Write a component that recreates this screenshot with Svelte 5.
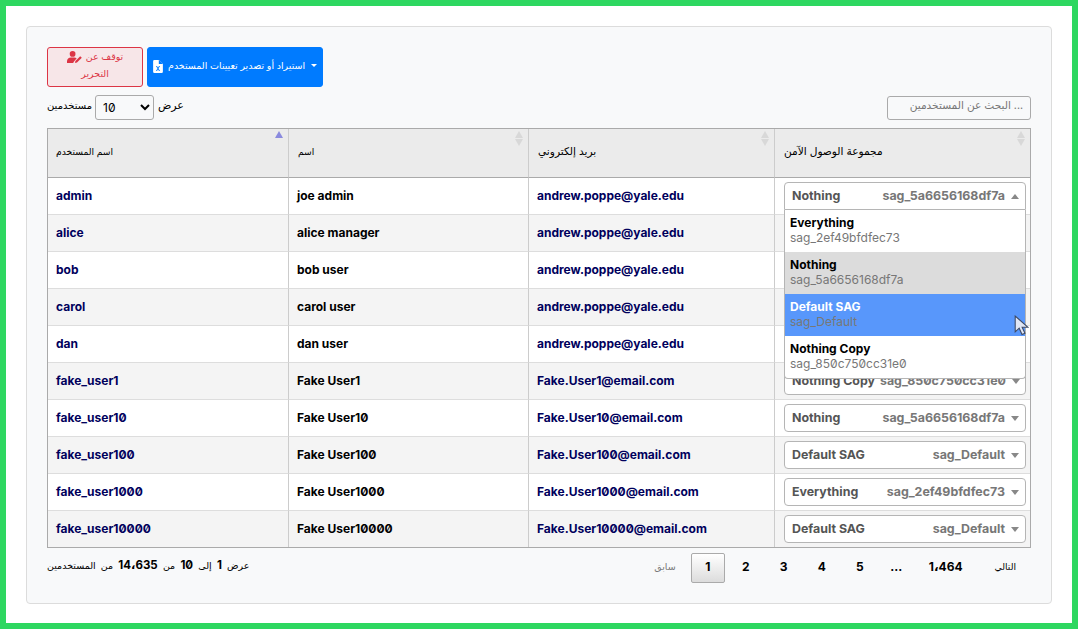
<script>
	const users = [
		{ id: 'admin', name: 'joe admin', email: 'andrew.poppe@yale.edu', sag: 'Nothing', code: 'sag_5a6656168df7a' },
		{ id: 'alice', name: 'alice manager', email: 'andrew.poppe@yale.edu', sag: 'Everything', code: 'sag_2ef49bfdfec73' },
		{ id: 'bob', name: 'bob user', email: 'andrew.poppe@yale.edu', sag: 'Nothing', code: 'sag_5a6656168df7a' },
		{ id: 'carol', name: 'carol user', email: 'andrew.poppe@yale.edu', sag: 'Nothing', code: 'sag_5a6656168df7a' },
		{ id: 'dan', name: 'dan user', email: 'andrew.poppe@yale.edu', sag: 'Nothing', code: 'sag_5a6656168df7a' },
		{ id: 'fake_user1', name: 'Fake User1', email: 'Fake.User1@email.com', sag: 'Nothing Copy', code: 'sag_850c750cc31e0' },
		{ id: 'fake_user10', name: 'Fake User10', email: 'Fake.User10@email.com', sag: 'Nothing', code: 'sag_5a6656168df7a' },
		{ id: 'fake_user100', name: 'Fake User100', email: 'Fake.User100@email.com', sag: 'Default SAG', code: 'sag_Default' },
		{ id: 'fake_user1000', name: 'Fake User1000', email: 'Fake.User1000@email.com', sag: 'Everything', code: 'sag_2ef49bfdfec73' },
		{ id: 'fake_user10000', name: 'Fake User10000', email: 'Fake.User10000@email.com', sag: 'Default SAG', code: 'sag_Default' }
	];
	const options = [
		{ sag: 'Everything', code: 'sag_2ef49bfdfec73', cls: '' },
		{ sag: 'Nothing', code: 'sag_5a6656168df7a', cls: 'selected' },
		{ sag: 'Default SAG', code: 'sag_Default', cls: 'active' },
		{ sag: 'Nothing Copy', code: 'sag_850c750cc31e0', cls: '' }
	];
	const columns = ['اسم المستخدم', 'اسم', 'بريد إلكتروني', 'مجموعة الوصول الآمن'];
	const pages = ['1', '2', '3', '4', '5', '...', '1،464'];
</script>

<div class="frame">
	<div class="card">
		<div class="buttons">
			<button class="btn-stop">
				<span class="line1">
					<svg viewBox="0 0 20 15" width="16" height="12">
						<circle cx="7" cy="3.6" r="3.6" fill="#dc3545" />
						<path d="M0 15v-2.200C0 10 2.200 8 5 8h4c1.200 0 2.300.4 3.100 1L8 14v1z" fill="#dc3545" />
						<path d="M10 15l.5-2.500 6-6 2 2-6 6z" fill="#dc3545" />
					</svg>
					<span dir="rtl">توقف عن</span>
				</span>
				<span class="line2" dir="rtl">التحرير</span>
			</button>
			<button class="btn-export">
				<svg viewBox="0 0 12 16" width="10" height="13">
					<path d="M0 1.500A1.500 1.500 0 0 1 1.500 0H7l5 5v9.500a1.500 1.500 0 0 1-1.500 1.500h-9A1.500 1.500 0 0 1 0 14.500z" fill="#fff" />
					<path d="M7 0v5h5z" fill="#007bff" />
					<path d="M3.500 7.500l1.800 3-1.800 3h1.300l1.200-2 1.200 2h1.300l-1.800-3 1.800-3H7.200L6 9.500l-1.200-2z" fill="#007bff" />
				</svg>
				<span class="export-label" dir="rtl">استيراد أو تصدير تعيينات المستخدم</span>
				<span class="caret"></span>
			</button>
		</div>

		<div class="controls">
			<div class="length">
				<span dir="rtl">مستخدمين</span>
				<select>
					<option>10</option>
				</select>
				<span class="show-label" dir="rtl">عرض</span>
			</div>
			<input class="search" dir="rtl" placeholder="... البحث عن المستخدمين" />
		</div>

		<div class="table-wrap">
			<table>
				<thead>
					<tr>
						{#each columns as col, i}
							<th class:wide={i > 1}>
								<span class="th-label" dir="rtl">{col}</span>
								<span class="sort" class:asc={i === 0}>
									<span class="up"></span>
									{#if i > 0}<span class="down"></span>{/if}
								</span>
							</th>
						{/each}
					</tr>
				</thead>
				<tbody>
					{#each users as user, i}
						<tr class:odd={i % 2 === 1}>
							<td class="link">{user.id}</td>
							<td>{user.name}</td>
							<td class="link">{user.email}</td>
							<td class="sag-cell">
								<div class="sag-select" class:open={i === 0}>
									<span class="sag-name">{user.sag}</span>
									<span class="sag-code">{user.code}</span>
									<span class="sag-arrow"></span>
								</div>
							</td>
						</tr>
					{/each}
				</tbody>
			</table>
			<div class="menu">
				{#each options as opt}
					<div class="option {opt.cls}">
						<div class="opt-name">{opt.sag}</div>
						<div class="opt-code">{opt.code}</div>
					</div>
				{/each}
			</div>
			<svg class="cursor" viewBox="0 0 14 20" width="15" height="21">
				<path d="M1 1v15l3.800-3.400 2.700 6 2.800-1.200-2.700-5.800H13z" fill="#dfe6f5" stroke="#3f4a63" stroke-width="1" />
			</svg>
		</div>

		<div class="footer">
			<div class="info" dir="rtl">عرض <b>1</b> إلى <b>10</b> من <b>14،635</b> من المستخدمين</div>
			<div class="pager">
				<span class="prev" dir="rtl">سابق</span>
				{#each pages as page, i}
					<span class="page" class:current={i === 0} class:dots={page === '...'}><span class="num">{page}</span></span>
				{/each}
				<span class="next" dir="rtl">التالي</span>
			</div>
		</div>
	</div>
</div>

<style>
	:global(body) {
		margin: 0;
		font-family: Inter, "DejaVu Sans", sans-serif;
		font-feature-settings: "zero";
	}
	.frame {
		box-sizing: border-box;
		width: 1078px;
		height: 629px;
		border: 6px solid #2ed760;
		background: #fff;
		padding: 20px 20px 19px 20px;
	}
	.card {
		box-sizing: border-box;
		height: 100%;
		background: #f8f9fa;
		border: 1px solid #dcdcdc;
		border-radius: 4px;
		padding: 20px;
		font-size: 9.200px;
		color: #000;
	}
	.buttons {
		display: flex;
		gap: 4px;
		height: 40px;
	}
	button {
		box-sizing: border-box;
		border-radius: 3px;
		font-family: inherit;
		font-size: 9.500px;
		height: 40px;
		padding: 0;
	}
	.btn-stop {
		width: 96px;
		background: #f7e6e8;
		border: 1px solid #dc3545;
		color: #dc3545;
		line-height: 17px;
		padding-bottom: 4px;
	}
	.line1 {
		display: flex;
		align-items: center;
		justify-content: center;
		gap: 3px;
	}
	.line2 {
		display: block;
	}
	.btn-export {
		width: 176px;
		background: #007bff;
		border: 1px solid #007bff;
		color: #fff;
		display: flex;
		align-items: center;
		padding-left: 5px;
		gap: 5px;
	}
	.btn-export svg {
		margin-bottom: 2px;
	}
	.export-label {
		padding-bottom: 4px;
	}
	.caret {
		width: 0;
		height: 0;
		border-left: 3px solid transparent;
		border-right: 3px solid transparent;
		border-top: 3px solid #fff;
		margin: 0 0 3px 1px;
	}
	.controls {
		display: flex;
		justify-content: space-between;
		align-items: center;
		height: 25px;
		margin: 8px 0;
	}
	.length {
		display: flex;
		align-items: center;
		gap: 3px;
		font-size: 10px;
	}
	.length span {
		padding-bottom: 5px;
	}
	.show-label {
		font-size: 11px;
		margin-left: 1px;
	}
	select {
		width: 59px;
		height: 25px;
		border: 1px solid #aaa;
		border-radius: 3px;
		background: #f8f9fa;
		font-family: inherit;
		font-feature-settings: "zero";
		font-size: 12px;
		padding-left: 3px;
		color: #000;
	}
	.search {
		box-sizing: border-box;
		width: 144px;
		height: 24px;
		border: 1px solid #aaa;
		border-radius: 3px;
		background: #f8f9fa;
		font-family: inherit;
		font-size: 10.600px;
		padding: 0 7px 4px;
	}
	.search::placeholder {
		color: #777;
	}
	.table-wrap {
		position: relative;
		width: 984px;
	}
	table {
		box-sizing: border-box;
		width: 984px;
		table-layout: fixed;
		border-collapse: separate;
		border-spacing: 0;
		border: 1px solid #aaa;
	}
	th {
		position: relative;
		box-sizing: border-box;
		height: 49px;
		background: #ebebeb;
		border-bottom: 1px solid #aaa;
		border-left: 1px solid #ccc;
		padding: 0 9px 3px;
		text-align: left;
		font-size: 9.200px;
		font-weight: 400;
	}
	th.wide {
		font-size: 10.600px;
	}
	th:first-child {
		width: 240px;
		border-left: 0;
		padding-left: 8px;
	}
	td:first-child {
		border-left: 0;
	}
	th:nth-child(2) {
		width: 240px;
	}
	th:nth-child(3) {
		width: 246px;
	}
	td {
		box-sizing: border-box;
		height: 37px;
		padding: 0 8px 2px;
		background: #fff;
		border-left: 1px solid #ccc;
		border-bottom: 1px solid #ddd;
		font-size: 12px;
		font-weight: 700;
		white-space: nowrap;
		overflow: hidden;
	}
	tbody tr:last-child td {
		height: 36px;
		border-bottom: 0;
	}
	tr.odd td {
		background: #f4f4f4;
	}
	.link {
		color: #00005c;
	}
	.sort {
		position: absolute;
		top: 2px;
		right: 5px;
		display: flex;
		flex-direction: column;
		gap: 1px;
	}
	.up,
	.down {
		width: 0;
		height: 0;
		border-left: 4.500px solid transparent;
		border-right: 4.500px solid transparent;
	}
	.up {
		border-bottom: 7px solid #d8d8d8;
	}
	.down {
		border-top: 7px solid #d8d8d8;
	}
	.asc .up {
		border-bottom-color: #8a8ade;
	}
	td.sag-cell {
		padding: 0 4px 0 9px;
	}
	.sag-select {
		box-sizing: border-box;
		height: 28px;
		display: flex;
		align-items: center;
		background: #fff;
		border: 1px solid #b5b5b5;
		border-radius: 4px;
		padding: 0 6px 2px 7px;
		color: #555;
		font-size: 12.400px;
	}
	.sag-select.open {
		border-radius: 4px 4px 0 0;
	}
	.sag-code {
		margin-left: auto;
		padding-left: 5px;
		color: #777;
	}
	.sag-arrow {
		flex: none;
		width: 0;
		height: 0;
		margin: 2px 0 0 6px;
		border-left: 4px solid transparent;
		border-right: 4px solid transparent;
		border-top: 5px solid #888;
	}
	.open .sag-arrow {
		border-top: 0;
		border-bottom: 5px solid #888;
	}
	.menu {
		position: absolute;
		top: 82px;
		left: 737px;
		box-sizing: border-box;
		width: 242px;
		background: #fff;
		border: 1px solid #b5b5b5;
		border-top: 0;
		border-radius: 0 0 4px 4px;
		overflow: hidden;
	}
	.option {
		box-sizing: border-box;
		height: 42px;
		padding: 5px 5px 0;
		line-height: 15px;
		font-size: 12px;
	}
	.opt-name {
		font-weight: 700;
		color: #000;
	}
	.opt-code {
		color: #777;
		font-size: 12px;
	}
	.option.selected {
		background: #dcdcdc;
	}
	.option.active {
		background: #5897fb;
	}
	.option.active .opt-name {
		color: #fff;
	}
	.cursor {
		position: absolute;
		left: 967px;
		top: 187px;
	}
	.footer {
		display: flex;
		justify-content: space-between;
		margin-top: 5px;
	}
	.info {
		font-size: 9.500px;
		margin-top: 5px;
		word-spacing: 2.500px;
	}
	.info b {
		font-size: 11.500px;
		font-weight: 700;
	}
	.pager {
		display: flex;
		align-items: center;
		height: 30px;
		padding-right: 15px;
		font-weight: 700;
		font-size: 12px;
	}
	.page {
		box-sizing: border-box;
		min-width: 34px;
		height: 30px;
		padding: 0 13px;
		margin-left: 4px;
		display: flex;
		align-items: center;
		justify-content: center;
	}
	.page.dots {
		min-width: 0;
		width: 31px;
		padding: 0;
	}
	.page.current {
		background: linear-gradient(#fff, #dcdcdc);
		border: 1px solid #aaa;
		border-radius: 2px;
	}
	.num {
		padding-bottom: 3px;
	}
	.prev {
		font-size: 9.500px;
		font-weight: 400;
		color: #777;
		margin: 0 11px 3px 0;
	}
	.next {
		font-size: 9.200px;
		font-weight: 400;
		margin: 0 0 3px 19px;
	}
</style>
